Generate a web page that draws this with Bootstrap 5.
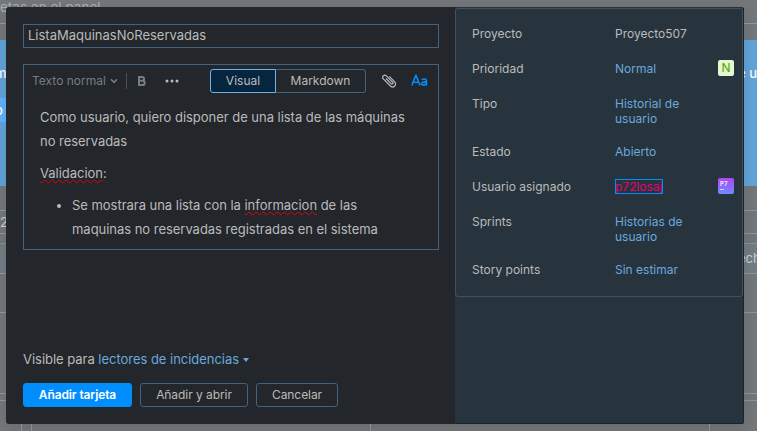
<!DOCTYPE html>
<html lang="es">
<head>
<meta charset="utf-8">
<meta name="viewport" content="width=device-width, initial-scale=1">
<title>Nueva tarjeta</title>
<link href="https://cdn.jsdelivr.net/npm/bootstrap@5.3.0/dist/css/bootstrap.min.css" rel="stylesheet">
<style>
  body { font-family: Inter, "Liberation Sans", sans-serif; font-size: 12px; line-height: 20px; color: #bbb; background: #75787b; height: 431px; overflow: hidden; }
  /* board behind the dialog */
  .board { height: 431px; background: #75787b; }
  .board > div { flex: none; overflow: hidden; white-space: nowrap; }
  .board-head { height: 24px; border-bottom: 1px solid #8a9ba7; font-size: 13.5px; line-height: 15px; color: #a9b0b6; }
  .board-gap { height: 16px; }
  .board-blue { height: 146px; background: #62a4da; color: #fff; font-size: 13px; font-weight: 500; padding-top: 23px; }
  .board-blue .hl { background: #62b2fb; height: 24px; margin-top: 15px; line-height: 24px; width: 60px; }
  .cut { margin-left: -5px; }
  .rule-a { height: 25px; border-bottom: 1px solid #8699a4; }
  .rule-b { height: 23px; border-bottom: 1px solid #8699a4; color: #d0d2d3; font-size: 13px; line-height: 22px; }
  .rule-c { height: 10px; border-bottom: 1px solid #8b9297; }
  .rule-d { height: 30px; background: #727e84; border-bottom: 1px solid #8f979b; color: #d0d2d3; line-height: 29px; font-size: 13px; }
  .rule-d span { display: inline-block; width: 19px; text-align: left; }
  .rule-e { height: 39px; border-bottom: 1px solid #8f979b; }
  .rule-f { height: 81px; border-bottom: 1px solid #8f979b; }
  .rule-g { height: 7px; border-bottom: 1px solid #8f979b; }
  .lanes { height: 30px; padding-left: 21px; }
  .lanes span { flex: none; border-left: 1px solid #959a9d; }
  .lane-s { width: 10px; }
  .lane-l { width: 339px; }
  /* dialog */
  .dlg { position: absolute; left: 6px; top: 7px; width: 738px; height: 417px; background: #23262a; border-radius: 3px; box-shadow: 0 4px 18px rgba(0,0,0,.12); overflow: hidden; }
  .main-pane { width: 449px; padding: 17px 16px 17px 17px; }
  .summary { height: 24px; border: 1px solid #406380; padding: 0 4px; font-size: 13px; line-height: 21px; }
  .editor { height: 186px; border: 1px solid #406380; margin-top: 16px; }
  .tools { height: 32px; padding: 4px 10px 4px 8px; }
  .tools svg, .tools span { flex: none; }
  .tools .fmt { color: #737e87; }
  .tools .chev { margin-left: 4px; }
  .tools .sep { width: 1px; height: 16px; background: #4a5157; margin: 0 10px 0 8px; }
  .tools .dots { margin-left: 18px; }
  .tools .clip { margin-left: 15px; }
  .tools .aa { margin-left: 14px; }
  .seg { height: 24px; border: 1px solid #406380; line-height: 22px; text-align: center; }
  .seg-on { width: 66px; background: #062640; border-color: #70b1e6; border-radius: 3px 0 0 3px; }
  .seg-off { width: 90px; border-left: 0; border-radius: 0 3px 3px 0; }
  .doc { padding: 8px 16px 0; font-size: 13px; line-height: 24px; letter-spacing: -.03px; }
  .doc p { margin: 0 0 8px; }
  .doc ul { margin: 0; padding: 0 24px 0 32px; }
  .typo { text-decoration: underline wavy #e6000e .6px; text-decoration-skip-ink: none; text-underline-offset: 1px; }
  .lnk { color: #6aa9df; }
  .visible-line { font-size: 13px; letter-spacing: -.03px; }
  .acts { gap: 8px; margin-top: 14px; }
  .act { height: 24px; border: 1px solid #406380; border-radius: 3px; padding: 0; font-size: 12px; line-height: 22px; color: #bbb; text-align: center; background: transparent; letter-spacing: -.06px; }
  .act-main { width: 109px; background: #008eff; border-color: #008eff; color: #fff; font-weight: 600; letter-spacing: -.12px; }
  .act-open { width: 108px; }
  .act-cancel { width: 82px; }
  .side-pane { width: 289px; background: #27343d; border-right: 1px solid #1b2228; border-bottom: 1px solid #1b2228; }
  .fields { height: 289px; border: 1px solid #43515a; border-radius: 3px; padding: 17px 8px 0 16px; line-height: 15px; margin-top: 1px; }
  .field { min-height: 17px; margin-bottom: 18px; }
  .field > :first-child { width: 143px; flex: none; }
  .field .val { width: 90px; }
  .tile { width: 16px; height: 16px; border-radius: 2px; line-height: 16px; text-align: center; margin-left: auto; margin-top: -1px; flex: none; }
  .prio { background: #e6f6cf; color: #4da400; font-size: 12px; line-height: 15px; }
  .avatar { background: linear-gradient(#b345f1, #6b8cff); color: #eadcff; font-size: 6px; font-weight: 800; line-height: 7px; text-align: left; padding: 2px 0 0 2px; }
  .avatar i { display: block; width: 4px; height: 1px; background: #dccfff; margin-top: 2px; }
  .picked { color: #e3007d; outline: 1px solid #008eff; outline-offset: -1px; display: inline-block; height: 15px; line-height: 15px; width: 48px; white-space: nowrap; }
</style>
<script src="https://cdn.jsdelivr.net/npm/bootstrap@5.3.0/dist/js/bootstrap.bundle.min.js"></script>
</head>
<body>
<div class="board d-flex flex-column">
  <div class="board-head"><span>etas en el panel</span></div>
  <div class="board-gap"></div>
  <div class="board-blue">
    <div class="d-flex justify-content-between"><span class="cut">m</span><span>e u</span></div>
    <div class="hl"><span class="cut">o</span></div>
  </div>
  <div class="rule-a"></div>
  <div class="rule-b">2</div>
  <div class="rule-c"></div>
  <div class="rule-d text-end"><span>ech</span></div>
  <div class="rule-e"></div>
  <div class="rule-f"></div>
  <div class="rule-g"></div>
  <div class="lanes d-flex"><span class="lane-s"></span><span class="lane-l"></span><span class="lane-l"></span><span></span></div>
</div>

<div class="dlg d-flex" role="dialog">
  <section class="main-pane d-flex flex-column">
    <div class="summary">ListaMaquinasNoReservadas</div>
    <div class="editor">
      <div class="tools d-flex align-items-center">
        <span class="fmt">Texto normal</span>
        <svg class="chev" width="8" height="6" viewBox="0 0 8 6" fill="none" stroke="#737e87" stroke-width="1.5"><path d="M1 1.200 4 4.300 7 1.200"/></svg>
        <span class="sep"></span>
        <svg width="10" height="12" viewBox="0 0 10 12" fill="none" stroke="#737e87" stroke-width="2"><path d="M2 2h3.200a1.900 1.900 0 0 1 0 3.800H2zM2 5.800h3.600a2.100 2.100 0 0 1 0 4.200H2z"/></svg>
        <svg class="dots" width="14" height="4" viewBox="0 0 14 4" fill="#bbb"><circle cx="2" cy="2" r="1.500"/><circle cx="7" cy="2" r="1.500"/><circle cx="12" cy="2" r="1.500"/></svg>
        <div class="d-flex ms-auto"><div class="seg seg-on">Visual</div><div class="seg seg-off">Markdown</div></div>
        <svg class="clip" width="16" height="16" viewBox="0 0 16 16" fill="none" stroke="#bbb" stroke-width="1.200"><path d="M5 5.500 10.200 10.700a1 1 0 0 0 1.500-1.500L5.300 2.800a2.100 2.100 0 0 0-3 3L9.500 13a2.900 2.900 0 0 0 4.200-4.200L8.300 3.400"/></svg>
        <svg class="aa" width="17" height="16" viewBox="0 0 17 16" fill="none" stroke="#008eff" stroke-width="1.600"><path d="M.8 12.500 4.700 2.500h.4L9 12.500M2.200 9.200h5.400M10.800 7.100c.8-1.500 4.600-1.600 4.600.9v4.500M15.400 8.800c-2 .1-4.800 0-4.800 1.900 0 2.200 4.800 1.800 4.800-1"/></svg>
      </div>
      <div class="doc">
        <p>Como usuario, quiero disponer de una lista de las máquinas no reservadas</p>
        <p><span class="typo">Validacion</span>:</p>
        <ul><li>Se mostrara una lista con la <span class="typo">informacion</span> de las maquinas no reservadas registradas en el sistema</li></ul>
      </div>
    </div>
    <div class="visible-line mt-auto">Visible para <span class="lnk">lectores de incidencias <svg width="6" height="4" viewBox="0 0 6 4" fill="#6aa9df" class="align-middle"><path d="M0 0h6L3 4z"/></svg></span></div>
    <div class="acts d-flex">
      <button class="act act-main">Añadir tarjeta</button>
      <button class="act act-open">Añadir y abrir</button>
      <button class="act act-cancel">Cancelar</button>
    </div>
  </section>
  <aside class="side-pane">
    <div class="fields">
      <div class="field d-flex"><span>Proyecto</span><span class="val">Proyecto507</span></div>
      <div class="field d-flex"><span>Prioridad</span><span class="val lnk">Normal</span><span class="tile prio">N</span></div>
      <div class="field d-flex"><span>Tipo</span><span class="val lnk">Historial de usuario</span></div>
      <div class="field d-flex"><span>Estado</span><span class="val lnk">Abierto</span></div>
      <div class="field d-flex"><span>Usuario asignado</span><span class="val"><span class="picked">p72losaj</span></span><span class="tile avatar">P7<i></i></span></div>
      <div class="field d-flex"><span>Sprints</span><span class="val lnk">Historias de usuario</span></div>
      <div class="field d-flex"><span>Story points</span><span class="val lnk">Sin estimar</span></div>
    </div>
  </aside>
</div>
</body>
</html>
